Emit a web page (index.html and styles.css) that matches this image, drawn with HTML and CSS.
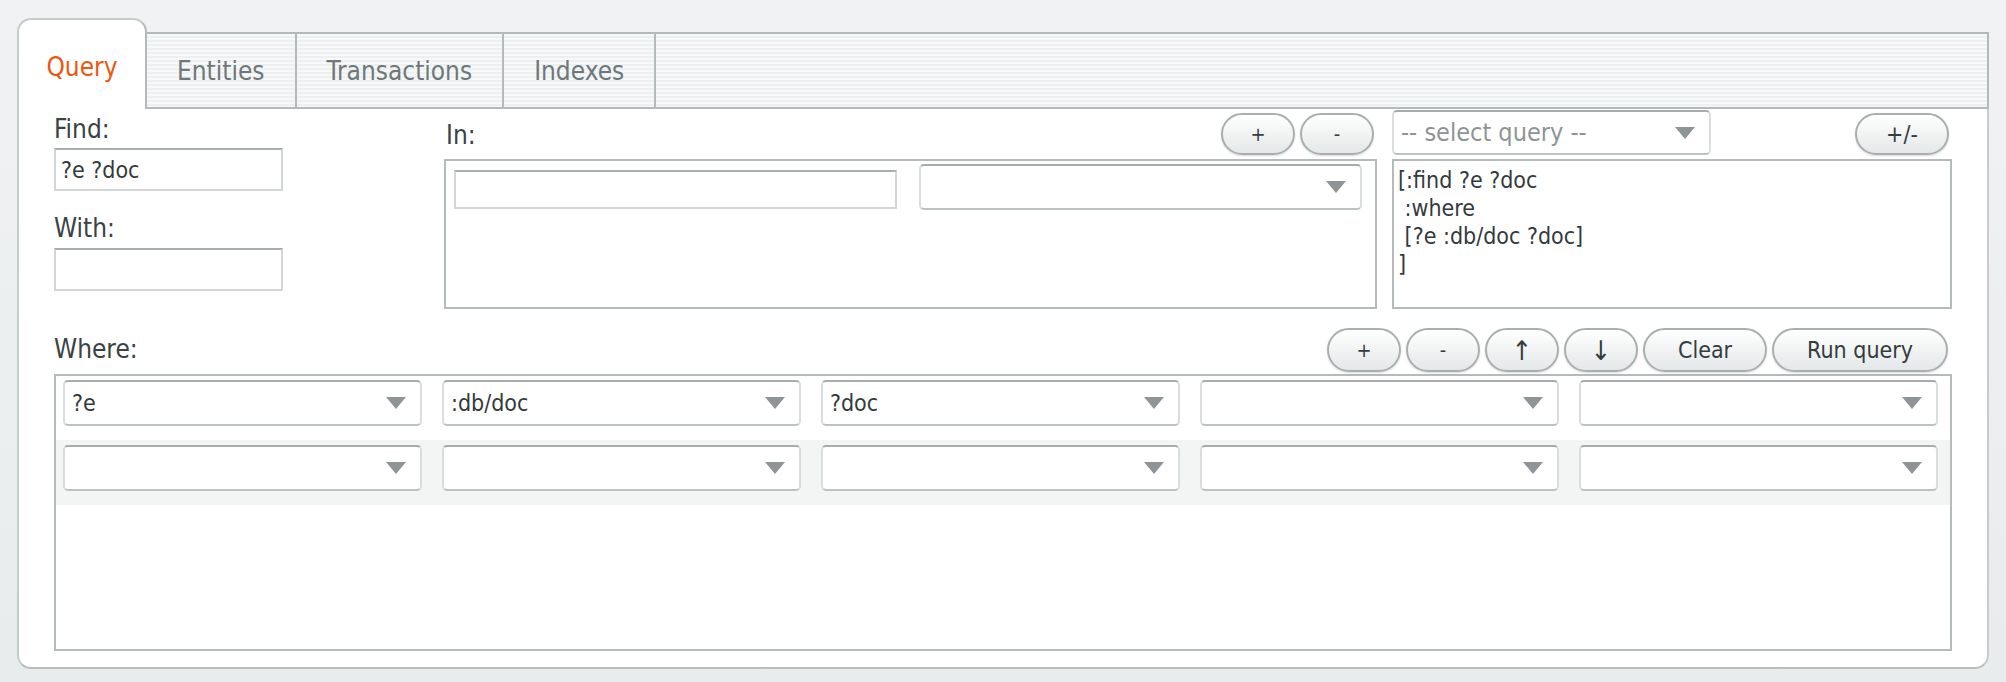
FILE: index.html
```html
<!DOCTYPE html>
<html lang="en">
<head>
  <meta charset="UTF-8" />
  <title>Datomic Console - Query</title>
  <link rel="stylesheet" href="styles.css">
</head>
<body>
  <div class="console">
    <div class="tabbar">
      <div class="tab active">Query</div>
      <div class="tab-strip">
        <div class="tab">Entities</div>
        <div class="tab">Transactions</div>
        <div class="tab">Indexes</div>
      </div>
    </div>

    <div class="panel">
      <div class="top">
        <div class="find-col">
          <div class="label">Find:</div>
          <input class="field find" type="text" value="?e ?doc">
          <div class="label with-label">With:</div>
          <input class="field with" type="text">
        </div>

        <div class="in-col">
          <div class="head">
            <span class="label in-label">In:</span>
            <div class="btns">
              <button class="btn sym">+</button>
              <button class="btn sym">-</button>
            </div>
          </div>
          <div class="in-box">
            <input class="field in-field" type="text">
            <div class="select"></div>
          </div>
        </div>

        <div class="query-col">
          <div class="head">
            <div class="select query-select">-- select query --</div>
            <button class="btn toggle">+/-</button>
          </div>
          <textarea class="query-text" spellcheck="false">[:find ?e ?doc
 :where
 [?e :db/doc ?doc]
]</textarea>
        </div>
      </div>

      <div class="where">
        <div class="head">
          <span class="label where-label">Where:</span>
          <div class="btns">
            <button class="btn sym">+</button>
            <button class="btn sym">-</button>
            <button class="btn sym arrow">↑</button>
            <button class="btn sym arrow">↓</button>
            <button class="btn">Clear</button>
            <button class="btn">Run query</button>
          </div>
        </div>
        <div class="where-box">
          <div class="clause">
            <div class="select">?e</div>
            <div class="select">:db/doc</div>
            <div class="select">?doc</div>
            <div class="select"></div>
            <div class="select"></div>
          </div>
          <div class="clause alt">
            <div class="select"></div>
            <div class="select"></div>
            <div class="select"></div>
            <div class="select"></div>
            <div class="select"></div>
          </div>
        </div>
      </div>
    </div>
  </div>
</body>
</html>
```

FILE: styles.css
```css
* {
  box-sizing: border-box;
}

body {
  margin: 0;
  background: linear-gradient(to bottom, #f0f2f3, #e8ecec);
  font-family: 'DejaVu Sans Condensed', 'DejaVu Sans', sans-serif;
  color: #3a4244;
}

.console {
  padding: 18px 17px 13px 17px;
}

/* Tabs */

.tabbar {
  display: flex;
  align-items: flex-end;
  height: 91px;
}

.tab {
  display: flex;
  align-items: center;
  justify-content: center;
  font-size: 26px;
  color: #6e777a;
}

.tab.active {
  width: 130px;
  height: 91px;
  padding-top: 4px;
  background: #fff;
  color: #ee5510;
  border: 2px solid #c6cbcb;
  border-right-color: #b3baba;
  border-bottom: none;
  border-radius: 14px 14px 0 0;
}

.tab-strip {
  flex: 1;
  display: flex;
  height: 77px;
  border-top: 2px solid #b3baba;
  border-bottom: 2px solid #b3baba;
  border-right: 2px solid #b3baba;
  background: repeating-linear-gradient(to bottom, #f7f8f8 0, #f7f8f8 2px, #edf0f0 2px, #edf0f0 4px);
}

.tab-strip .tab {
  padding: 0 30px;
  border-right: 2px solid #b3baba;
}

/* Panel */

.panel {
  background: #fff;
  border: 2px solid #c6cbcb;
  border-top: none;
  border-bottom-color: #b9bfbf;
  border-radius: 0 0 14px 14px;
  padding: 1px 35px 16px 35px;
}

.label {
  font-size: 26px;
  line-height: 30px;
  color: #3a4244;
}

.top {
  display: grid;
  grid-template-columns: 375px 1fr 560px;
  column-gap: 15px;
}

.field {
  display: block;
  border: 2px solid #d2d6d6;
  border-top-color: #a8aeae;
  background: #fff;
  font-family: inherit;
  font-size: 23px;
  color: #333a3c;
  padding: 0 5px;
  outline: none;
}

.find-col {
  padding-top: 4px;
}

.find-col .field {
  width: 229px;
  height: 43px;
  margin-top: 4px;
}

.find-col .with-label {
  margin-top: 22px;
}

.find-col .field.with {
  margin-top: 5px;
}

.head {
  display: flex;
  justify-content: space-between;
  align-items: flex-end;
  height: 45px;
}

.in-label {
  align-self: flex-start;
  margin-top: 10px;
  padding-left: 2px;
}

.btns {
  display: flex;
  gap: 5px;
}

.btn {
  height: 42px;
  padding: 0 33px;
  border: 2px solid #a9afaf;
  border-radius: 22px;
  background: linear-gradient(to bottom, #ffffff, #e4e8e8);
  box-shadow: 0 1px 2px rgba(0, 0, 0, 0.15);
  font-family: inherit;
  font-size: 23px;
  color: #343c3e;
  cursor: pointer;
}

.btn.sym {
  width: 74px;
  padding: 0;
  font-size: 20px;
}

.btn.arrow {
  font-size: 27px;
  line-height: 1;
}

.in-col .btns {
  margin-right: 3px;
}

.in-box {
  display: grid;
  grid-template-columns: 1fr 1fr;
  column-gap: 22px;
  align-items: start;
  height: 150px;
  margin-top: 4px;
  padding: 3px 13px 0 8px;
  border: 2px solid #b5bbbb;
}

.in-box .field {
  width: 100%;
  height: 39px;
  margin-top: 6px;
}

/* Select boxes */

.select {
  position: relative;
  display: flex;
  align-items: center;
  height: 46px;
  padding: 0 44px 0 7px;
  border: 2px solid #d9dddd;
  border-top-color: #a6acac;
  border-bottom-color: #bcc1c1;
  border-radius: 5px;
  background: #fff;
  font-size: 23px;
  color: #333a3c;
  white-space: nowrap;
}

.select::after {
  content: '';
  position: absolute;
  right: 14px;
  top: 50%;
  margin-top: -6px;
  border-left: 10px solid transparent;
  border-right: 10px solid transparent;
  border-top: 12px solid #8f9597;
}

.query-select {
  width: 319px;
  height: 45px;
  font-size: 25px;
  color: #8e9496;
}

.query-col .toggle {
  width: 94px;
  padding: 0;
  margin-right: 3px;
}

.query-text {
  display: block;
  width: 100%;
  height: 150px;
  margin: 4px 0 0 0;
  padding: 5px 4px;
  border: 2px solid #b5bbbb;
  font-family: inherit;
  font-size: 23px;
  line-height: 28px;
  color: #333a3c;
  resize: none;
  overflow: hidden;
  outline: none;
}

/* Where clauses */

.where {
  margin-top: 19px;
}

.where .head {
  height: 44px;
  align-items: flex-start;
}

.where .btns {
  margin-right: 4px;
}

.where .btn {
  height: 44px;
}

.where-label {
  margin-top: 6px;
}

.where-box {
  height: 277px;
  margin-top: 2px;
  border: 2px solid #b5bbbb;
}

.clause {
  display: grid;
  grid-template-columns: repeat(5, 1fr);
  column-gap: 20px;
  padding: 4px 12px 14px 7px;
}

.clause.alt {
  background: #f3f5f5;
  padding-top: 5px;
}
```
